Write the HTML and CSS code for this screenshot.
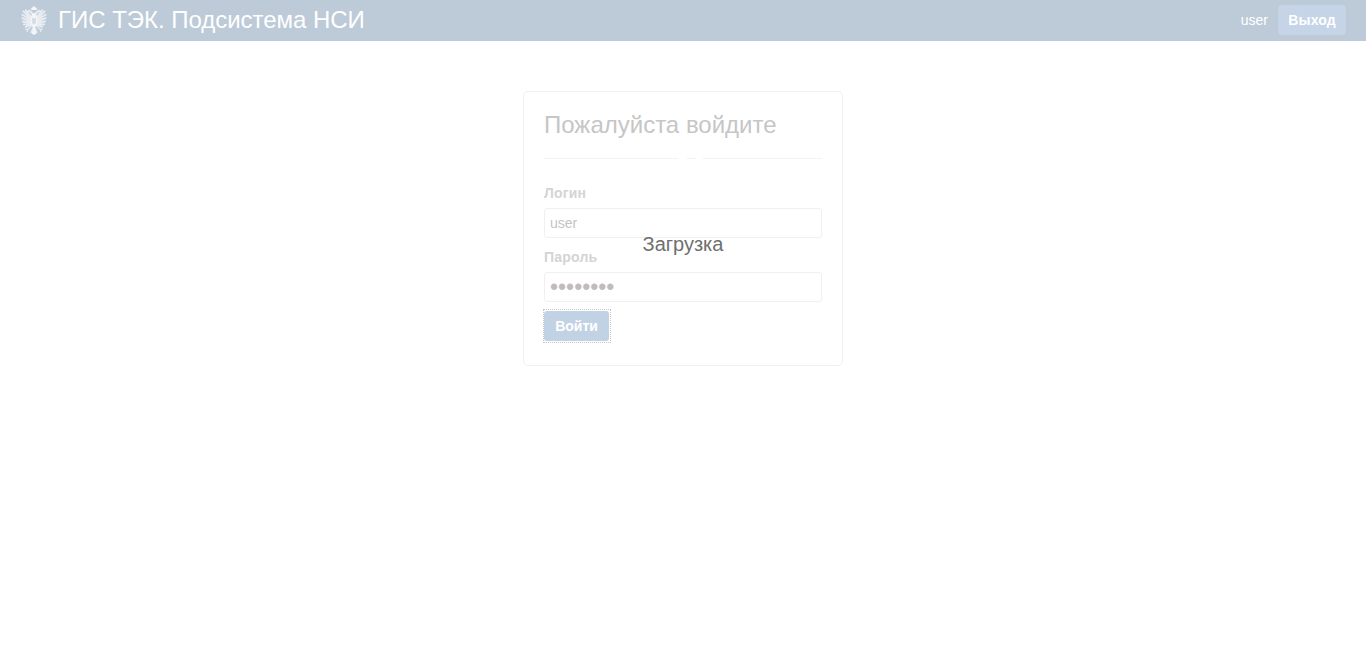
FILE: index.html
```html
<!DOCTYPE html>
<html lang="ru">
<head>
<meta charset="utf-8">
<title>ГИС ТЭК. Подсистема НСИ</title>
<link rel="stylesheet" href="styles.css">
</head>
<body>
<header class="navbar">
  <a class="brand" href="#">
    <svg class="emblem" width="26" height="31" viewBox="0 0 27 31" aria-hidden="true">
      <defs>
        <g id="half" fill="none" stroke="#e9edf2" stroke-linecap="round">
          <path stroke-width="2" d="M10.500 12 5 5M9.500 13 2.500 6M9.500 14.500 1.500 9.500M9.500 16 1.500 13M9.500 17.500 2 16.500M9.500 19 3 19.500M10 20 5 22"/>
          <path stroke-width="2.200" d="M12.500 9.500C11.500 7.500 10.500 6.500 8.500 5.500"/>
          <path stroke-width="1.200" d="M9 5 6 6.500"/>
          <path stroke-width="1.300" d="M10.500 21.500 7 25M7 25 5 24.500M7 25 6.500 27"/>
          <path stroke-width="1.500" d="M13 22 10.500 28"/>
        </g>
      </defs>
      <use href="#half"/>
      <use href="#half" transform="translate(27 0) scale(-1 1)"/>
      <path fill="#f3f5f8" d="M10.500 3 13.500.5 16.500 3v1.500h-6z"/>
      <path fill="#f3f5f8" d="M12 8h3l2 4v8l-3.500 3.500L10 20v-8z"/>
      <path fill="#d5dde6" d="M11.500 13h4v5l-2 2-2-2z"/>
      <path fill="#f3f5f8" d="M12.500 23h2l1.500 6-2.500 1.500L11 29z"/>
    </svg>
    <span class="brand-name">ГИС ТЭК. Подсистема НСИ</span>
  </a>
  <div class="user-box">
    <span class="user-name">user</span>
    <button class="logout" type="button">Выход</button>
  </div>
</header>
<main class="content">
  <form class="card">
    <h2 class="card-title">Пожалуйста войдите</h2>
    <div class="divider">
      <span class="rule rule-left"></span>
      <span class="rule-dash"></span>
      <span class="rule rule-right"></span>
    </div>
    <label class="field-label" for="login">Логин</label>
    <input class="field" id="login" type="text" value="user">
    <label class="field-label" for="pass">Пароль</label>
    <input class="field field-pass" id="pass" type="password" value="password">
    <button class="submit" type="button">Войти</button>
    <div class="loading">Загрузка</div>
  </form>
</main>
</body>
</html>
```
FILE: styles.css
```css
* { box-sizing: border-box; }
html, body { height: 100%; }
body {
  margin: 0;
  background: #fff;
  font-family: "Liberation Sans", Arial, sans-serif;
  font-size: 14px;
  color: #c4c4c4;
}
.navbar {
  height: 41px;
  background: #bdcad8;
  display: flex;
  align-items: flex-start;
  justify-content: space-between;
  padding: 0 20px;
}
.brand {
  display: flex;
  align-items: center;
  gap: 11px;
  color: #fff;
  text-decoration: none;
  height: 40px;
}
.emblem { display: block; margin-left: 1px; }
.brand-name { font-size: 24px; line-height: 40px; letter-spacing: -0.03px; }
.user-box { display: flex; align-items: center; gap: 10px; margin-top: 5px; height: 30px; }
.user-name { color: #fff; font-size: 14px; line-height: 30px; }
.logout {
  width: 68px;
  height: 30px;
  border: 0;
  border-radius: 4px;
  background: #c5d4e6;
  color: #fff;
  font: bold 14px "Liberation Sans", Arial, sans-serif;
  letter-spacing: 0.1px;
  padding: 0;
}
.content { display: flex; justify-content: center; padding-top: 50px; }
.card {
  position: relative;
  width: 320px;
  height: 275px;
  border: 1px solid #f1f1f1;
  border-radius: 5px;
  padding: 20px;
  display: flex;
  flex-direction: column;
  align-items: flex-start;
}
.card-title {
  margin: 0;
  font-size: 24px;
  font-weight: normal;
  line-height: 26px;
  color: #c6c6c6;
}
.divider {
  width: 278px;
  margin-top: 20px;
  display: flex;
  align-items: center;
  height: 1px;
}
.rule { height: 1px; background: #f3f3f3; }
.rule-left { width: 134px; }
.rule-right { width: 119px; }
.rule-dash { width: 9px; height: 1px; margin: 0 7px 0 9px; background: #f3f3f3; }
.field-label {
  margin-top: 26px;
  font-weight: bold;
  line-height: 16px;
  letter-spacing: 0.2px;
  color: #d4d4d4;
}
.field-label + .field { margin-top: 7px; }
.field + .field-label { margin-top: 11px; }
.field {
  width: 278px;
  height: 30px;
  border: 1px solid #f0f0f0;
  border-radius: 3px;
  background: #fff;
  padding: 0 5px;
  font: 14px "Liberation Sans", Arial, sans-serif;
  color: #c4c4c4;
  outline: none;
}
.field-pass { font-size: 23px; color: #c0bcbc; }
.submit {
  position: relative;
  margin-top: 9px;
  width: 65px;
  height: 30px;
  border: 0;
  border-radius: 3px;
  background: #c2d2e5;
  color: #fff;
  font: bold 14px "Liberation Sans", Arial, sans-serif;
  padding: 0;
}
.submit::after {
  content: "";
  position: absolute;
  inset: -2px -2px -2px -1px;
  border: 1px dotted #c6c6c6;
}
.loading {
  position: absolute;
  left: 0;
  right: 0;
  top: 141px;
  text-align: center;
  font-size: 20px;
  line-height: 22px;
  color: #6f6f6f;
}
```
